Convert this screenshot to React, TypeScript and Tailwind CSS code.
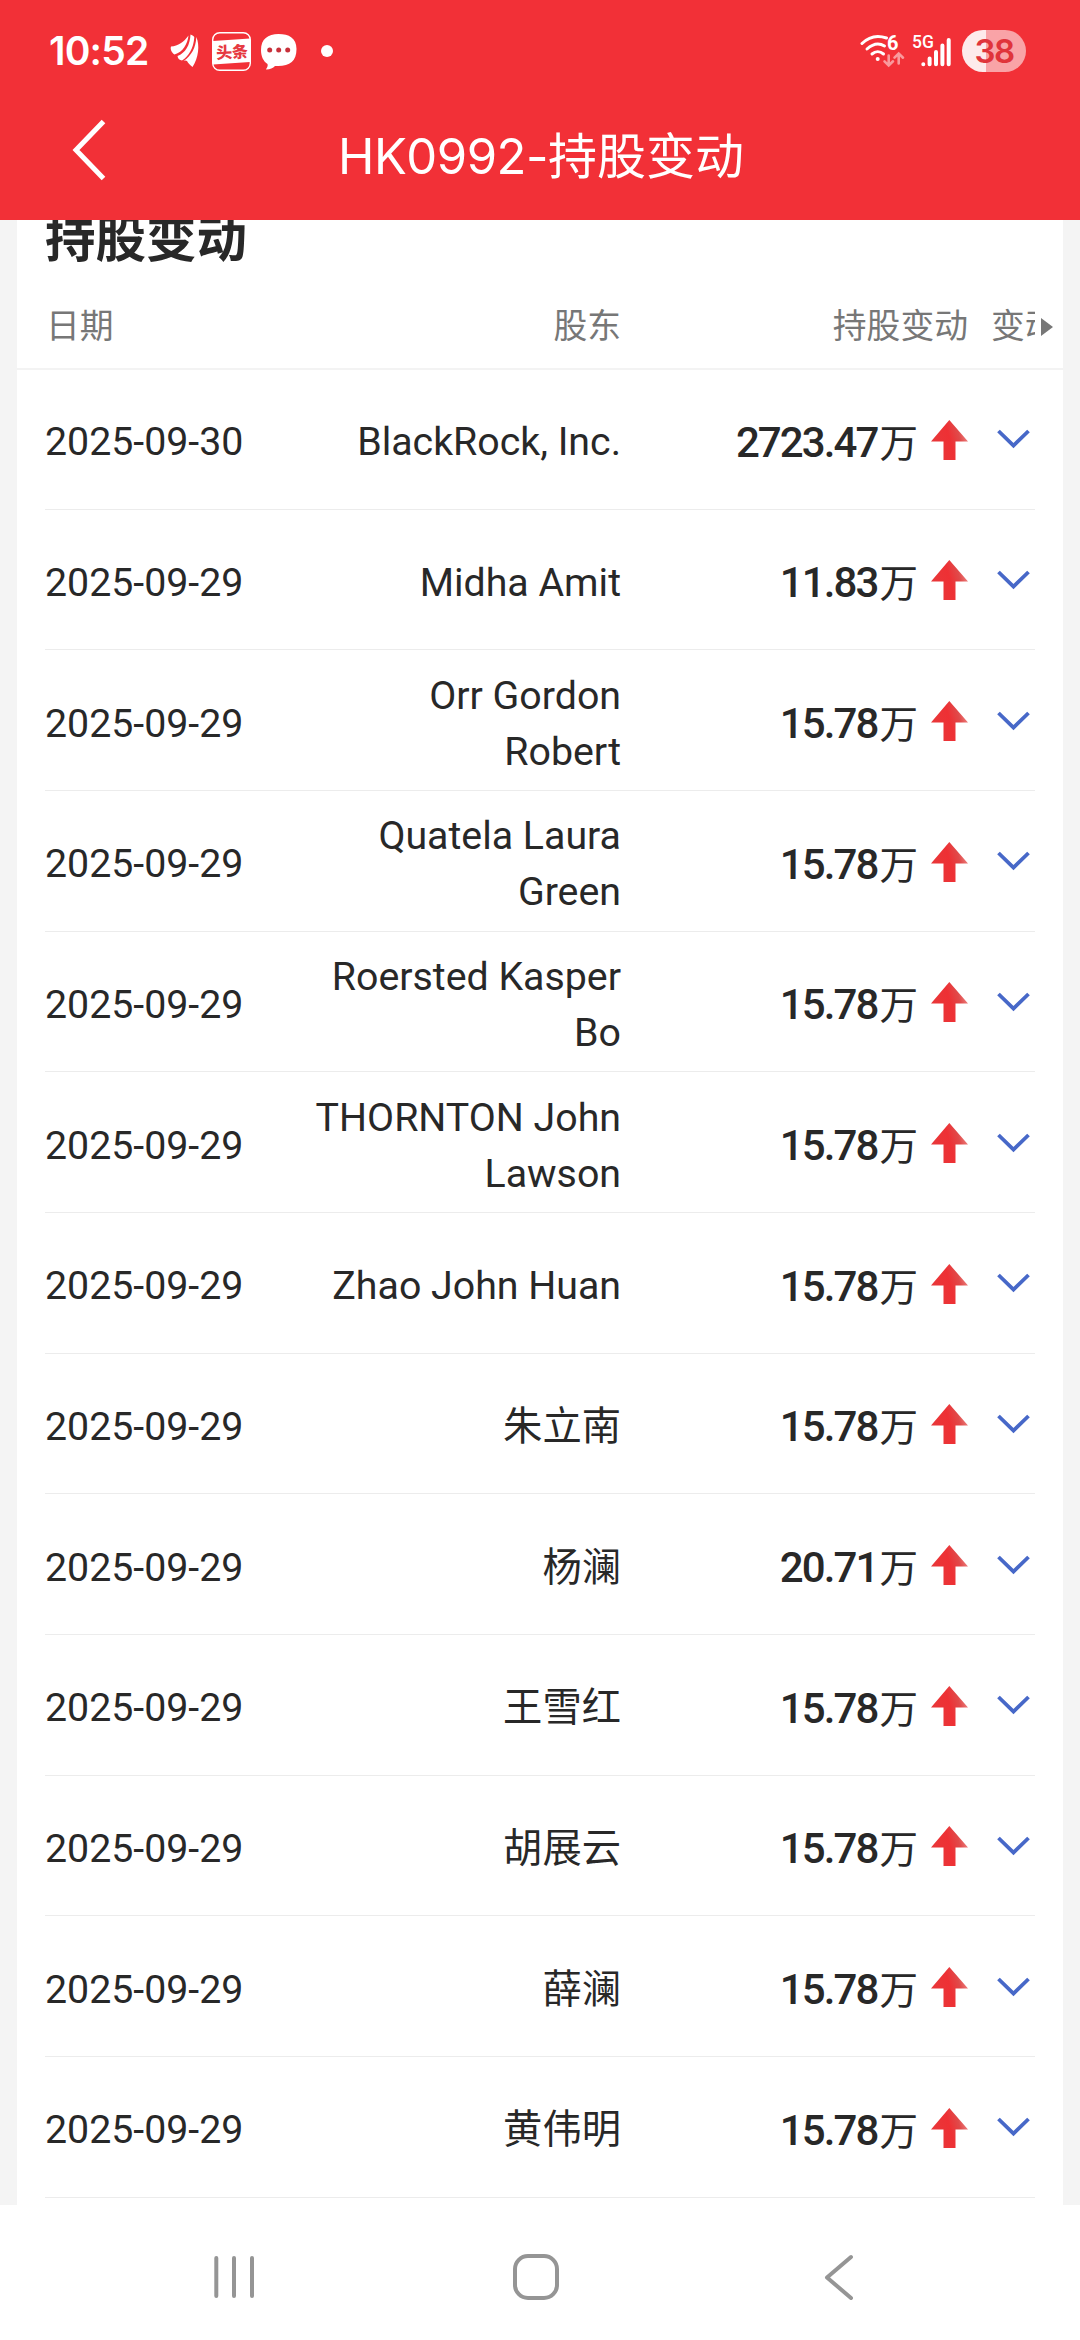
type Holding = { date: string; holder: string; amount: string };

const holdings: Holding[] = [
  { date: "2025-09-30", holder: "BlackRock, Inc.", amount: "2723.47" },
  { date: "2025-09-29", holder: "Midha Amit", amount: "11.83" },
  { date: "2025-09-29", holder: "Orr Gordon\nRobert", amount: "15.78" },
  { date: "2025-09-29", holder: "Quatela Laura\nGreen", amount: "15.78" },
  { date: "2025-09-29", holder: "Roersted Kasper\nBo", amount: "15.78" },
  { date: "2025-09-29", holder: "THORNTON John\nLawson", amount: "15.78" },
  { date: "2025-09-29", holder: "Zhao John Huan", amount: "15.78" },
  { date: "2025-09-29", holder: "朱立南", amount: "15.78" },
  { date: "2025-09-29", holder: "杨澜", amount: "20.71" },
  { date: "2025-09-29", holder: "王雪红", amount: "15.78" },
  { date: "2025-09-29", holder: "胡展云", amount: "15.78" },
  { date: "2025-09-29", holder: "薛澜", amount: "15.78" },
  { date: "2025-09-29", holder: "黄伟明", amount: "15.78" },
];

function WingIcon() {
  return (
    <svg className="ml-[22px] h-[34px] w-[30px]" viewBox="0 0 30 34" fill="#fff">
      <path d="M1 12.500C8 12 14 8 18.500 1.500C17.500 10 13 18 4.500 20.500C1.500 18.500 0 15 1 12.500Z" />
      <path d="M20.500 0.500C23 1.500 24.300 2.500 24.300 3.500C23.500 14 19 22 12 26.500C9.500 26 8 25 7.500 22C15.500 19 20 11 20.500 0.500Z" />
      <path d="M26.300 3C30 11 28.500 24 22.500 33C20 31 18 29 17 27C16 26.300 14.500 26.300 13.500 27C21.500 22 26 13 26.300 3Z" />
    </svg>
  );
}

function ToutiaoIcon() {
  return (
    <div className="relative ml-[12px] h-[39px] w-[39px]">
      <svg className="h-[39px] w-[39px]" viewBox="0 0 39 39">
        <rect x="0.7" y="0.7" width="37.6" height="37.6" rx="7" fill="none" stroke="#fff" strokeWidth="1.4" />
        <path d="M1 9L38 6.5V30L1 32.5Z" fill="#fff" />
      </svg>
      <span className="absolute left-[4px] top-[9px] -rotate-3 whitespace-nowrap font-['Noto_Sans_CJK_SC',sans-serif] text-[16px] font-black leading-[20px] text-[#e63a42]">
        头条
      </span>
    </div>
  );
}

function BubbleIcon() {
  return (
    <svg className="ml-[10px] h-[37px] w-[36px]" viewBox="0 0 36 37">
      <path
        d="M17.5 1C28 1 35.5 5 35.5 16C35.5 28 29 33 17 33H14C12 35 9 36.500 5.500 36.500C5 36.500 5 36 5.300 35.700C6.500 34 7 32.500 6.500 31C2 28 0 23 0 17C0 6 7 1 17.500 1Z"
        fill="#fff"
      />
      <circle cx="8.700" cy="17" r="2.500" fill="#c8303a" />
      <circle cx="17.700" cy="17" r="2.500" fill="#c8303a" />
      <circle cx="26.700" cy="17" r="2.500" fill="#c8303a" />
    </svg>
  );
}

function WifiIcon() {
  return (
    <div className="relative h-[34px] w-[46px]">
      <svg className="h-[34px] w-[46px]" viewBox="0 0 46 34" fill="none" stroke="#fff" strokeWidth="3" strokeLinecap="round">
        <path d="M2 9.500C9.500 2 18 1 26.500 4" />
        <path d="M7 15C13 9.500 19 8.500 24.500 12" />
        <path d="M12 20C15.500 17 20 17 23.500 20" />
        <circle cx="17.700" cy="25" r="2" fill="#fff" stroke="none" />
        <g stroke="#f9999c" strokeWidth="2.600">
          <path d="M28.700 21.500V31M24.500 27.300L28.700 31.500L33 27.300" />
          <path d="M38.700 29.500V20M34.500 23.700L38.700 19.500L43 23.700" />
        </g>
      </svg>
      <span className="absolute left-[27px] top-[-1px] font-['Roboto',sans-serif] text-[20px] font-bold leading-[20px]">
        6
      </span>
    </div>
  );
}

function SignalIcon() {
  return (
    <div className="relative ml-[6px] h-[34px] w-[40px]">
      <span className="absolute left-0 top-[-2px] font-['Roboto',sans-serif] text-[17.5px] font-medium leading-[20px]">
        5G
      </span>
      <svg className="h-[34px] w-[40px]" viewBox="0 0 40 34" stroke="#fff" strokeWidth="4" strokeLinecap="round">
        <path d="M11.300 30.200V30.200M17.600 24.500V30.200M24 18V30.200M30.400 11.500V30.200M36.700 6V30.200" />
      </svg>
    </div>
  );
}

function StatusBar() {
  return (
    <div className="flex h-[102px] items-center pl-[49px] pr-[54px] text-white">
      <span className="w-[99px] whitespace-nowrap font-['Inter',sans-serif] text-[39px] font-semibold leading-[44px] tracking-[-0.8px]">
        10:52
      </span>
      <WingIcon />
      <ToutiaoIcon />
      <BubbleIcon />
      <div className="ml-[24px] h-[12px] w-[12px] rounded-full bg-white" />
      <div className="flex-1" />
      <WifiIcon />
      <SignalIcon />
      <div className="ml-[10px] flex h-[42px] w-[64px] items-center justify-center rounded-full bg-linear-to-r from-[#fdeaeb] from-[37%] to-[#f9a3a7] to-[37%] font-['Inter',sans-serif] text-[33px] font-semibold leading-none tracking-[-1.5px] text-[#e0343b]">
        38
      </div>
    </div>
  );
}

function TitleBar() {
  return (
    <div className="flex h-[118px] items-start text-white">
      <svg className="ml-[72px] mt-[17px] h-[62px] w-[36px]" viewBox="0 0 36 62" fill="none" stroke="#fff" strokeWidth="5">
        <path d="M31.500 2.500L4 31L31.500 59.500" />
      </svg>
      <h1 className="mr-[106px] mt-[25px] flex-1 text-center font-['Inter','Noto_Sans_CJK_SC',sans-serif] text-[49px] font-normal leading-[60px]">
        <span className="tracking-[-0.5px]">HK0992-</span>持股变动
      </h1>
    </div>
  );
}

function UpArrow() {
  return (
    <svg className="ml-[13px] mt-[2px] h-[40px] w-[37px]" viewBox="0 0 37 40">
      <defs>
        <linearGradient id="rise" x1="0" y1="0.6" x2="1" y2="0.3">
          <stop offset="0" stopColor="#e8383a" />
          <stop offset="0.5" stopColor="#ee3034" />
          <stop offset="0.75" stopColor="#e04a4a" />
          <stop offset="1" stopColor="#f08a88" />
        </linearGradient>
      </defs>
      <path d="M18.300 0L37 21.500H24.500V40H12.500V21.500H0Z" fill="url(#rise)" />
    </svg>
  );
}

function HoldingRow({ date, holder, amount }: Holding) {
  return (
    <div className="flex h-[140.667px] items-center border-b border-[#ececec] text-[39.3px] text-[#282828]">
      <span className="w-[230px] pt-[7px] leading-[56px]">{date}</span>
      <span className="w-[346px] whitespace-pre-line pt-[7px] text-right leading-[56px]">{holder}</span>
      <span className="flex flex-1 items-baseline justify-end whitespace-nowrap pt-[9px] leading-[56px]">
        <span className="text-[42px] font-medium tracking-[-1.9px]">{amount}</span>
        <span className="ml-[2px] text-[38.5px]">万</span>
      </span>
      <UpArrow />
      <svg className="ml-[29px] mr-[5px] mt-[1px] h-[20px] w-[33px]" viewBox="0 0 33 20" fill="none" stroke="#4768c8" strokeWidth="3.800">
        <path d="M1.500 2L16.500 16.500L31.500 2" />
      </svg>
    </div>
  );
}

function NavBar() {
  return (
    <div className="flex h-[135px] items-start bg-white pt-[49px]">
      <svg className="ml-[213px] h-[46px] w-[42px]" viewBox="0 0 42 46" stroke="#959595" strokeWidth="4" strokeLinecap="round">
        <path d="M3.300 4V42M21 4V42M39 4V42" />
      </svg>
      <div className="ml-[258px] h-[46px] w-[46px] rounded-[15px] border-[4.5px] border-[#959595]" />
      <svg className="ml-[265px] h-[46px] w-[30px]" viewBox="0 0 30 46" fill="none" stroke="#959595" strokeWidth="4" strokeLinecap="round" strokeLinejoin="round">
        <path d="M27 3L3 23.500L27 44" />
      </svg>
    </div>
  );
}

export default function App() {
  return (
    <div className="flex h-[2340px] w-[1080px] flex-col overflow-hidden bg-white font-['Roboto','Noto_Sans_CJK_SC',sans-serif]">
      <header className="h-[220px] bg-[#f23037]">
        <StatusBar />
        <TitleBar />
      </header>
      <main className="h-[1985px] overflow-hidden bg-[#f4f4f4] pl-[17px] pr-[17px]">
        <div className="h-full bg-white">
          <div className="h-[56px] overflow-hidden pl-[28px]">
            <h2 className="-mt-[16px] text-[50.5px] font-bold leading-[72px] text-[#282828]">持股变动</h2>
          </div>
          <div className="flex h-[94px] items-center border-b-2 border-[#f3f3f3] pl-[29px] pt-[10px] text-[33.8px] leading-[50px] text-[#777]">
            <span className="w-[229px]">日期</span>
            <span className="w-[346px] text-right">股东</span>
            <span className="w-[347px] text-right">持股变动</span>
            <span className="ml-[23px] w-[44px] overflow-hidden whitespace-nowrap">变动</span>
            <svg className="ml-[6px] h-[18px] w-[12px]" viewBox="0 0 12 18">
              <path d="M0 0L12 9L0 18Z" fill="#777" />
            </svg>
          </div>
          <div className="-mt-px pl-[28px] pr-[28px]">
            {holdings.map((h) => (
              <HoldingRow key={h.holder} {...h} />
            ))}
          </div>
        </div>
      </main>
      <NavBar />
    </div>
  );
}
